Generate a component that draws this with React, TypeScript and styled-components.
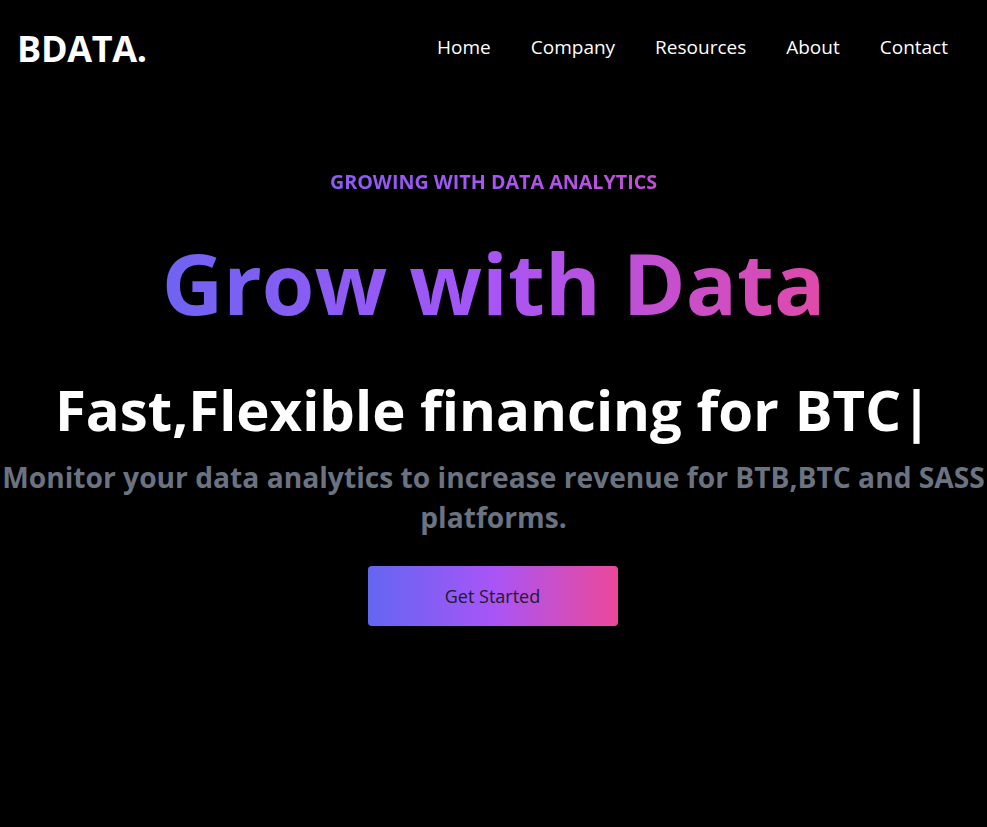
import React, { FC } from 'react';
import styled, { createGlobalStyle } from 'styled-components';

const GlobalStyle = createGlobalStyle`
	html, body {
		margin: 0;
		padding: 0;
		background-color: #000;
	}
	body {
		font-family: 'Open Sans', 'Noto Sans', sans-serif;
		color: #fff;
	}
	* {
		box-sizing: border-box;
	}
`;

const gradient = 'linear-gradient(to right, #6366f1, #a855f7, #ec4899)';

const Page = styled.div`
	width: 100%;
	min-height: 827px;
	background-color: #000;
	overflow: hidden;
`;

const NavBar = styled.nav`
	display: flex;
	justify-content: space-between;
	align-items: center;
	height: 96px;
	max-width: 1240px;
	margin: 0 auto;
	padding: 0 19px 0 16px;
`;

const Logo = styled.h1`
	margin: 0 0 0 1px;
	font-size: 36px;
	font-weight: 700;
	letter-spacing: -0.3px;
	color: #fff;
`;

const NavList = styled.ul`
	display: flex;
	list-style: none;
	margin: -2px 0 0;
	padding: 0;
`;

const NavItem = styled.li`
	padding: 0 20px;
	font-size: 19px;
	color: #fff;
	cursor: pointer;
`;

const Hero = styled.section`
	display: flex;
	flex-direction: column;
	align-items: center;
	text-align: center;
	width: 100%;
`;

const GradientText = styled.div`
	width: 800px;
	background: ${gradient};
	-webkit-background-clip: text;
	background-clip: text;
	color: transparent;
	font-weight: 700;
`;

const Eyebrow = styled(GradientText)`
	margin-top: 76px;
	font-size: 19.7px;
	line-height: 1;
`;

const Headline = styled(GradientText)`
	margin-top: 48px;
	font-size: 85px;
	line-height: 1;
`;

const TypedRow = styled.div`
	display: flex;
	justify-content: center;
	align-items: center;
	margin-top: 56px;
	font-size: 56.3px;
	font-weight: 700;
	line-height: 1;
	white-space: nowrap;
`;

const Typed = styled.span`
	padding-left: 16px;
`;

const Subtitle = styled.p`
	width: 987px;
	margin: 20px 0 0;
	font-size: 28.2px;
	font-weight: 700;
	line-height: 40px;
	color: #6b7280;
`;

const StartButton = styled.button`
	width: 250px;
	height: 60px;
	margin: 29px 2px 0 0;
	border: none;
	border-radius: 4px;
	background: ${gradient};
	color: #1e1b2e;
	font-family: 'Open Sans', 'Noto Sans', sans-serif;
	font-size: 18px;
	font-weight: 400;
	cursor: pointer;
`;

const links = ['Home', 'Company', 'Resources', 'About', 'Contact'];

const App: FC = () => {
	return <Page>
		<GlobalStyle />
		<NavBar>
			<Logo>BDATA.</Logo>
			<NavList>
				{links.map(link => <NavItem key={link}>{link}</NavItem>)}
			</NavList>
		</NavBar>
		<Hero>
			<Eyebrow>GROWING WITH DATA ANALYTICS</Eyebrow>
			<Headline>Grow with Data</Headline>
			<TypedRow>
				<span>Fast,Flexible financing for</span>
				<Typed>BTC|</Typed>
			</TypedRow>
			<Subtitle>Monitor your data analytics to increase revenue for BTB,BTC and SASS<br />platforms.</Subtitle>
			<StartButton>Get Started</StartButton>
		</Hero>
	</Page>;
}

export default App;
